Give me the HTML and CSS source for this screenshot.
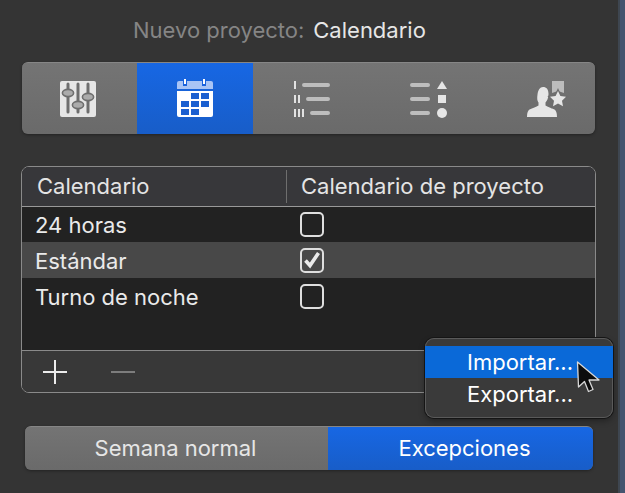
FILE: index.html
```html
<!DOCTYPE html>
<html lang="es">
<head>
<meta charset="utf-8">
<title>Nuevo proyecto</title>
<link rel="stylesheet" href="styles.css">
</head>
<body>
<div class="app">
  <main class="panel">
    <h1 class="title"><span class="title-label">Nuevo proyecto:</span><span class="title-value">Calendario</span></h1>

    <div class="tabs">
      <div class="tab tab-first">
        <svg class="tab-icon" width="36" height="38" viewBox="0 0 36 38">
          <rect x="0" y="2" width="36" height="36" rx="2" fill="#e6e6e6"/>
          <g stroke="#6e6e6e" stroke-width="3" stroke-linecap="round">
            <path d="M8 5v28M18 5v28M28 5v28"/>
          </g>
          <g fill="#ababab" stroke="#6e6e6e" stroke-width="1.6">
            <ellipse cx="8" cy="14" rx="5.6" ry="3.6"/>
            <ellipse cx="18" cy="26" rx="5.6" ry="3.6"/>
            <ellipse cx="28" cy="18" rx="5.6" ry="3.6"/>
          </g>
        </svg>
      </div>
      <div class="tab tab-on">
        <svg class="tab-icon" width="36" height="38" viewBox="0 0 36 38">
          <path d="M0 4a2 2 0 0 1 2-2h32a2 2 0 0 1 2 2v6H0z" fill="#a9c4f5"/>
          <path d="M0 12h36v24a2 2 0 0 1-2 2H2a2 2 0 0 1-2-2z" fill="#fff"/>
          <path d="M6 0h4v7H6zM25 0h4v7h-4z" fill="#1a62dc"/>
          <path d="M7 0h2v5H7zM26 0h2v5h-2z" fill="#fff"/>
          <path d="M14 14h8v6h-8zM24 14h8v6h-8zM4 22h8v6H4zM14 22h8v6h-8zM24 22h8v6h-8zM4 30h8v6H4zM14 30h8v6h-8z" fill="#1a5fd0"/>
        </svg>
      </div>
      <div class="tab tab-list">
        <svg class="tab-icon" width="36" height="38" viewBox="0 0 36 38">
          <path d="M0 2h2v8H0zM0 16h2v8H0zM4 16h2v8H4zM0 30h2v8H0zM4 30h2v8H4zM8 30h2v8H8z" fill="#e2e2e2"/>
          <g stroke="#bdbdbd" stroke-width="4" stroke-linecap="round">
            <path d="M10 6h24M14 20h20M18 34h16"/>
          </g>
        </svg>
      </div>
      <div class="tab">
        <svg class="tab-icon" width="38" height="38" viewBox="0 0 38 38">
          <g stroke="#bdbdbd" stroke-width="4" stroke-linecap="round">
            <path d="M4 6h16M4 20h16M4 34h16"/>
          </g>
          <path d="M34 2l5 8H29z" fill="#e6e6e6"/>
          <rect x="30" y="16" width="8" height="8" fill="#e6e6e6"/>
          <circle cx="34" cy="34" r="5" fill="#e6e6e6"/>
        </svg>
      </div>
      <div class="tab tab-last">
        <svg class="tab-icon" width="38" height="38" viewBox="0 0 38 38">
          <path d="M25 2h12v12l-6-2-6 2z" fill="#bcbcbc"/>
          <path d="M16 8c3.500 0 5.500 2.500 5.500 7 0 4-1.500 7-3 8.500v3c2 1.500 6 2.500 9 4 1.500 1 2.500 3 2.500 7.500H0c0-4.500 1-6.500 2.500-7.500 3-1.500 7-2.500 9-4v-3c-1.500-1.500-1.500-4.500-1-8 .5-4.500 2.500-7.500 5.500-7.500z" fill="#e6e6e6"/>
          <path class="star" d="M31 12l2.400 5 5.600.8-4 3.900 1 5.500-5-2.700-5 2.700 1-5.500-4-3.900 5.600-.8z" fill="#e6e6e6" stroke="#6e6e6e" stroke-width="2.500"/>
        </svg>
      </div>
    </div>

    <section class="table">
      <div class="thead">
        <div class="th th-name">Calendario</div>
        <div class="th th-project">Calendario de proyecto</div>
      </div>
      <div class="tbody">
        <div class="row"><span class="cell-name">24 horas</span><span class="check"></span></div>
        <div class="row row-on"><span class="cell-name">Estándar</span>
          <span class="check">
            <svg class="tick" width="20" height="20" viewBox="0 0 20 20"><path d="M3.500 10.500l4.500 5L16.500 3" fill="none" stroke="#eaeaea" stroke-width="3.600"/></svg>
          </span>
        </div>
        <div class="row"><span class="cell-name">Turno de noche</span><span class="check"></span></div>
      </div>
      <div class="tfoot">
        <svg class="plus" width="26" height="26" viewBox="0 0 26 26"><path d="M13 1v24M1 13h24" stroke="#ececec" stroke-width="2"/></svg>
        <svg class="minus" width="26" height="26" viewBox="0 0 26 26"><path d="M1 13h24" stroke="#7d7d7d" stroke-width="2"/></svg>
      </div>
    </section>

    <div class="segments">
      <div class="segment">Semana normal</div>
      <div class="segment segment-on">Excepciones</div>
    </div>

    <div class="menu">
      <div class="menu-item menu-item-on">Importar...</div>
      <div class="menu-item">Exportar...</div>
    </div>
    <svg class="cursor" width="26" height="36" viewBox="0 0 26 36">
      <path d="M1.500 2l1 25 6-5.500 4 10 4.500-2-4-9.500H23z" fill="#0c0c0c" stroke="#d8d8d8" stroke-width="1.300" stroke-linejoin="round"/>
    </svg>
  </main>
  <div class="edge"></div>
</div>
</body>
</html>
```
FILE: styles.css
```css
* { box-sizing: border-box; }
html, body { margin: 0; height: 100%; overflow: hidden; }
body { font-family: Inter, "Liberation Sans", sans-serif; background: #333; color: #e6e6e6; }
.app { display: flex; width: 625px; height: 493px; }
.panel { position: relative; width: 618px; flex: none; background: #343434; }
.edge { flex: 1; background: #44546f; border-left: 2px solid #3e4650; }

.title { margin: 0; height: 62px; padding: 15px 0 0 133px; display: flex; gap: 9px; font-size: 22px; font-weight: 400; line-height: 30px; }
.title-label { color: #858585; }
.title-value { color: #e6e6e6; }

.tabs { display: flex; width: 573px; height: 72px; margin-left: 22px; border-radius: 6px; overflow: hidden; background: linear-gradient(#747474, #6a6a6a); border-top: 1px solid #868686; box-shadow: 0 1px 3px rgba(0,0,0,.35); }
.tab { flex: none; width: 116px; display: flex; align-items: center; justify-content: center; }
.tab-first { width: 115px; padding-right: 3px; }
.tab-list { padding-left: 2px; }
.tab-last { padding-left: 5px; }
.tab-on { background: linear-gradient(#1767e4, #185dc8); }
.tab-icon { display: block; margin-top: -1px; overflow: visible; }
.star { paint-order: stroke; }

.table { width: 575px; height: 227px; margin: 32px 0 0 21px; border: 1px solid #8a8a8a; border-radius: 8px; overflow: hidden; display: flex; flex-direction: column; background: #222; }
.thead { display: flex; height: 40px; flex: none; background: #37373a; border-bottom: 1px solid #999; font-size: 22px; line-height: 39px; }
.th { color: #e4e4e4; }
.th-name { width: 264px; padding-left: 15px; }
.th-project { flex: 1; padding-left: 15px; position: relative; }
.th-project::before { content: ""; position: absolute; left: 0; top: 3px; height: 33px; width: 1px; background: #6e6e6e; }

.tbody { flex: 1; background: #222; }
.row { display: flex; align-items: center; height: 36px; font-size: 22px; color: #eaeaea; }
.row:first-child { height: 35px; }
.row + .row .cell-name { padding-top: 1px; }
.row-on { background: #484848; }
.cell-name { width: 278px; padding-left: 13px; }
.check { width: 24px; height: 25px; border: 2px solid #dedede; border-radius: 5px; display: block; }
.tick { display: block; }

.tfoot { display: flex; align-items: center; flex: none; height: 42px; background: #383838; border-top: 1px solid #8a8a8a; padding-left: 20px; gap: 42px; }
.plus, .minus { display: block; }

.segments { display: flex; width: 568px; height: 44px; margin: 33px 0 0 25px; border-radius: 6px; overflow: hidden; border-top: 1px solid #868686; background: linear-gradient(#747474, #6a6a6a); font-size: 22px; line-height: 42px; text-align: center; box-shadow: 0 1px 3px rgba(0,0,0,.35); }
.segment { width: 303px; padding-right: 2px; color: #e6e6e6; }
.segment-on { flex: 1; padding: 0 0 0 8px; background: linear-gradient(#1767e4, #185dc8); color: #fff; }

.menu { position: absolute; left: 425px; top: 338px; width: 188px; height: 80px; padding-top: 8px; border-radius: 9px; background: #3a3a3a; box-shadow: inset 0 0 0 1px #5a5a5a, 0 0 0 1px #151515, 0 3px 6px rgba(0,0,0,.35); font-size: 22px; overflow: hidden; }
.menu-item { height: 32px; padding-left: 42px; line-height: 32px; color: #fff; }
.menu-item-on { background: #0a69d8; }
.cursor { position: absolute; left: 576px; top: 360px; }
```
